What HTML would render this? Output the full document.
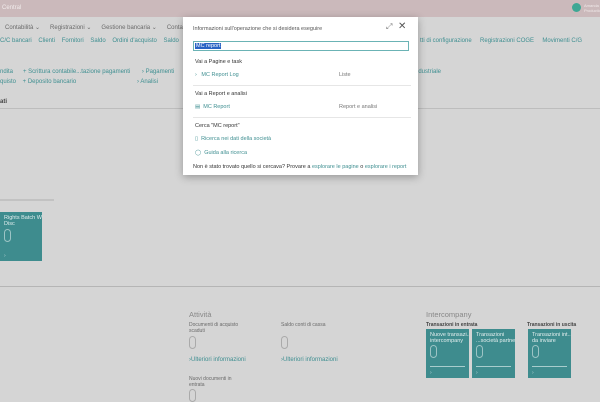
<!DOCTYPE html>
<html><head><meta charset="utf-8"><style>
*{margin:0;padding:0;box-sizing:border-box}
body{width:600px;height:400px;overflow:hidden;background:#d5d5d5;font-family:"Liberation Sans",sans-serif;position:relative;font-size:6px;color:#6a6a6a}
.a{position:absolute;white-space:nowrap}
.t{color:#3f8f91}
.tile{position:absolute;background:#3e8c8e;color:#e4efef;font-size:5.5px;padding:3px 4px;line-height:6px;white-space:nowrap;overflow:hidden}
.tile .z{position:absolute;left:4px;top:16px;width:7px;height:13px;border:1px solid #9cc4c5;border-radius:4px}
.tile .ln{position:absolute;left:4px;right:4px;top:37px;height:1px;background:#a8cdcd}
.tile .ar{position:absolute;left:4px;bottom:2px;font-size:5px;color:#b8d8d8}
.dlg{position:absolute;left:183px;top:17px;width:235px;height:158px;background:#fff;box-shadow:0 2px 8px rgba(0,0,0,.3)}
.dlg .a{color:#333}
.sep{position:absolute;left:10px;width:218px;height:1px;background:#e6e6e6}
</style></head><body>
<div class="a" style="left:0;top:0;width:600px;height:17px;background:#cbb9bb"></div>
<div class="a" style="left:2px;top:5px;color:#f2ecec;font-size:6px">Central</div>
<div class="a" style="left:572px;top:3px;width:9px;height:9px;border-radius:50%;background:#3ea794"></div>
<div class="a" style="left:584px;top:3px;font-size:4px;color:#f0eaea;line-height:5px">Amanda<br>Production</div>

<div class="a" style="left:5px;top:24px">Contabilità ⌄&nbsp;&nbsp;&nbsp;&nbsp;&nbsp; Registrazioni ⌄&nbsp;&nbsp;&nbsp;&nbsp;&nbsp; Gestione bancaria ⌄&nbsp;&nbsp;&nbsp;&nbsp;&nbsp; Contabilità</div>
<div class="a t" style="left:0;top:38px">C/C bancari&nbsp;&nbsp;&nbsp; Clienti&nbsp;&nbsp;&nbsp; Fornitori&nbsp;&nbsp;&nbsp; Saldo&nbsp;&nbsp;&nbsp; Ordini d'acquisto&nbsp;&nbsp;&nbsp; Saldo</div>
<div class="a t" style="left:420px;top:38px">tti di configurazione&nbsp;&nbsp;&nbsp;&nbsp; Registrazioni COGE&nbsp;&nbsp;&nbsp;&nbsp; Movimenti C/G</div>
<div class="a t" style="left:0;top:69px">ndita&nbsp;&nbsp;&nbsp;&nbsp;&nbsp; + Scrittura contabile...tazione pagamenti&nbsp;&nbsp;&nbsp;&nbsp;&nbsp;&nbsp; › Pagamenti</div>
<div class="a t" style="left:0;top:79px">quisto&nbsp;&nbsp;&nbsp; + Deposito bancario</div>
<div class="a t" style="left:137px;top:79px">› Analisi</div>
<div class="a t" style="left:415px;top:69px">ndustriale</div>
<div class="a" style="left:0;top:99px;color:#444;font-weight:bold;font-size:6px">ati</div>
<div class="a" style="left:0;top:108px;width:600px;height:1px;background:#bdbdbd"></div>
<div class="a" style="left:0;top:199px;width:54px;height:2px;background:#c2c2c2"></div>
<div class="tile" style="left:0;top:212px;width:42px;height:49px">Rights Batch WS<br>Disc<div class="z" style="top:17px"></div><div class="ar">›</div></div>
<div class="a" style="left:0;top:286px;width:600px;height:1px;background:#b5b5b5"></div>

<div class="a" style="left:189px;top:310px;font-size:7.5px;color:#888">Attività</div>
<div class="a" style="left:189px;top:322px;font-size:5px;line-height:6px">Documenti di acquisto<br>scaduti</div>
<div class="a" style="left:189px;top:336px;width:7px;height:13px;border:1px solid #aaa;border-radius:4px"></div>
<div class="a t" style="left:189px;top:357px">›Ulteriori informazioni</div>
<div class="a" style="left:189px;top:376px;font-size:5px;line-height:6px">Nuovi documenti in<br>entrata</div>
<div class="a" style="left:189px;top:389px;width:7px;height:13px;border:1px solid #aaa;border-radius:4px"></div>
<div class="a" style="left:281px;top:322px;font-size:5px">Saldo conti di cassa</div>
<div class="a" style="left:281px;top:336px;width:7px;height:13px;border:1px solid #aaa;border-radius:4px"></div>
<div class="a t" style="left:281px;top:357px">›Ulteriori informazioni</div>

<div class="a" style="left:426px;top:310px;font-size:7.5px;color:#888">Intercompany</div>
<div class="a" style="left:426px;top:322px;font-size:5px;color:#444;font-weight:bold">Transazioni in entrata</div>
<div class="a" style="left:527px;top:322px;font-size:5px;color:#444;font-weight:bold">Transazioni in uscita</div>
<div class="tile" style="left:426px;top:329px;width:43px;height:49px">Nuove transazi...<br>intercompany<div class="z"></div><div class="ln"></div><div class="ar">›</div></div>
<div class="tile" style="left:472px;top:329px;width:43px;height:49px">Transazioni<br>...società partner<div class="z"></div><div class="ln"></div><div class="ar">›</div></div>
<div class="tile" style="left:528px;top:329px;width:43px;height:49px">Transazioni int...<br>da inviare<div class="z"></div><div class="ln"></div><div class="ar">›</div></div>

<div class="dlg">
<div class="a" style="left:10px;top:9px;font-size:5.5px;color:#555">Informazioni sull'operazione che si desidera eseguire</div>
<div class="a" style="left:203px;top:5px;font-size:8px;color:#777">⤢</div>
<div class="a" style="left:215px;top:4px;font-size:10px;color:#555">✕</div>
<div class="a" style="left:10px;top:24px;width:216px;height:10px;border:1px solid #6bb3b5"></div>
<div class="a" style="left:12px;top:26px;background:#2a63c4;color:#fff !important;font-size:5.5px;line-height:6px;padding:0 1px">MC report</div>
<div class="a" style="left:12px;top:42px;font-size:5.5px">Vai a Pagine e task</div>
<div class="a t" style="left:12px;top:55px;font-size:5.5px;color:#3f8f91">›&nbsp;&nbsp; MC Report Log</div>
<div class="a" style="left:156px;top:55px;font-size:5.5px;color:#777">Liste</div>
<div class="sep" style="top:68px"></div>
<div class="a" style="left:12px;top:74px;font-size:5.5px">Vai a Report e analisi</div>
<div class="a" style="left:12px;top:87px;font-size:5.5px;color:#3f8f91">▤&nbsp; MC Report</div>
<div class="a" style="left:156px;top:87px;font-size:5.5px;color:#777">Report e analisi</div>
<div class="sep" style="top:100px"></div>
<div class="a" style="left:12px;top:106px;font-size:5.5px">Cerca "MC report"</div>
<div class="a" style="left:12px;top:119px;font-size:5.5px;color:#3f8f91">▯&nbsp; Ricerca nei dati della società</div>
<div class="a" style="left:12px;top:133px;font-size:5.5px;color:#3f8f91">◯&nbsp; Guida alla ricerca</div>
<div class="a" style="left:10px;top:147px;font-size:5.5px">Non è stato trovato quello si cercava? Provare a <span style="color:#3f8f91">esplorare le pagine</span> o <span style="color:#3f8f91">esplorare i report</span></div>
</div>
</body></html>
